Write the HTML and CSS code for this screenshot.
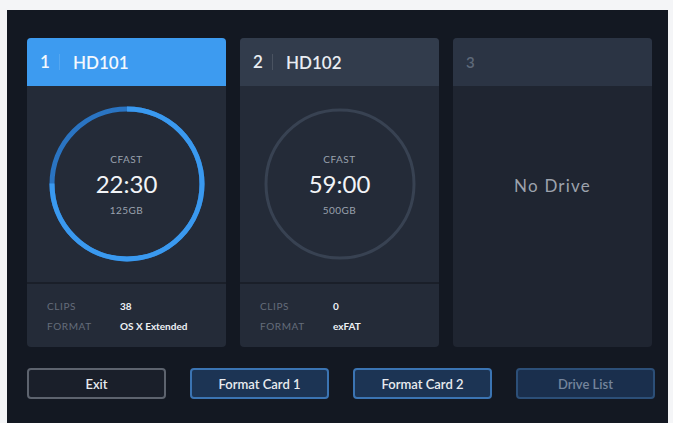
FILE: index.html
```html
<!DOCTYPE html>
<html lang="en">
<head>
  <meta charset="UTF-8">
  <title>Drive Manager</title>
  <meta name="viewport" content="width=device-width, initial-scale=1.0">
  <link rel="stylesheet" href="styles.css">
</head>
<body>

  <div class="screen">
    <div class="slots">

      <div class="slot active">
        <div class="slot-head">
          <span class="num">1</span>
          <span class="name">HD101</span>
        </div>
        <div class="slot-body">
          <div class="dial">
            <svg width="158" height="158" viewBox="0 0 158 158">
              <circle cx="79" cy="79" r="75" fill="none" stroke="#2a74c2" stroke-width="5"/>
              <circle cx="79" cy="79" r="75" fill="none" stroke="#3a99ef" stroke-width="5"
                      stroke-dasharray="353.4 471.2" transform="rotate(-90 79 79)"/>
            </svg>
            <div class="dial-text">
              <span class="media">CFAST</span>
              <span class="time">22:30</span>
              <span class="size">125GB</span>
            </div>
          </div>
        </div>
        <div class="slot-foot">
          <span class="label">CLIPS</span><span class="value">38</span>
          <span class="label">FORMAT</span><span class="value">OS X Extended</span>
        </div>
      </div>

      <div class="slot">
        <div class="slot-head">
          <span class="num">2</span>
          <span class="name">HD102</span>
        </div>
        <div class="slot-body">
          <div class="dial">
            <svg width="158" height="158" viewBox="0 0 158 158">
              <circle cx="79" cy="79" r="74" fill="none" stroke="#384252" stroke-width="3"/>
            </svg>
            <div class="dial-text">
              <span class="media">CFAST</span>
              <span class="time">59:00</span>
              <span class="size">500GB</span>
            </div>
          </div>
        </div>
        <div class="slot-foot">
          <span class="label">CLIPS</span><span class="value">0</span>
          <span class="label">FORMAT</span><span class="value">exFAT</span>
        </div>
      </div>

      <div class="slot empty">
        <div class="slot-head">
          <span class="num">3</span>
        </div>
        <div class="slot-body">
          <span class="no-drive">No Drive</span>
        </div>
      </div>

    </div>

    <div class="actions">
      <button class="btn">Exit</button>
      <button class="btn primary">Format Card 1</button>
      <button class="btn primary">Format Card 2</button>
      <button class="btn disabled">Drive List</button>
    </div>
  </div>

</body>
</html>
```

FILE: styles.css
```css
body {
  margin: 0;
  background: #f4f5f7;
  font-family: 'Lato', 'Open Sans', sans-serif;
  color: #e6e9ee;
}
.screen {
  margin: 10px 0 0 7px;
  width: 661px;
  height: 413px;
  background: #131822;
  padding: 28px 15px 0 20px;
  box-sizing: border-box;
}
.slots {
  display: grid;
  grid-template-columns: 199px 199px 199px;
  column-gap: 14px;
}
.slot {
  height: 309px;
  background: #242b38;
  border-radius: 4px;
  overflow: hidden;
  display: flex;
  flex-direction: column;
}
.slot-head {
  height: 48px;
  background: #323c4c;
  display: flex;
  align-items: center;
  padding-left: 13px;
  font-size: 17px;
  font-weight: 600;
  color: #e9edf2;
}
.slot.active .slot-head {
  background: #3d9bf0;
  color: #f4f8fd;
}
.num {
  width: 19px;
  border-right: 1px solid rgba(255,255,255,0.12);
  line-height: 16px;
  margin-right: 13px;
}
.slot-body {
  height: 196px;
  display: flex;
  align-items: center;
  justify-content: center;
}
.dial {
  position: relative;
  width: 158px;
  height: 158px;
}
.dial svg {
  display: block;
}
.dial-text {
  position: absolute;
  inset: 0;
  display: flex;
  flex-direction: column;
  align-items: center;
  justify-content: center;
}
.media, .size {
  font-size: 10px;
  color: #9aa2ae;
  letter-spacing: 0.5px;
}
.time {
  font-size: 24px;
  color: #f2f4f7;
  margin: 7px 0 8px;
  line-height: 24px;
}
.slot-foot {
  flex: 1;
  border-top: 2px solid #1a1f29;
  display: grid;
  grid-template-columns: 73px 1fr;
  align-content: center;
  row-gap: 8px;
  padding-left: 20px;
  font-size: 10px;
}
.label {
  color: #646d7b;
  letter-spacing: 0.6px;
}
.value {
  color: #eef1f5;
  font-weight: 700;
}
.slot.empty {
  background: #1f2531;
}
.slot.empty .slot-head {
  background: #2b3444;
  color: #5e6979;
  font-size: 15px;
}
.slot.empty .num {
  border-right: none;
}
.no-drive {
  font-size: 17px;
  color: #9da3ad;
  letter-spacing: 1.2px;
  margin-top: 2px;
}
.actions {
  display: grid;
  grid-template-columns: repeat(4, 139px);
  column-gap: 24px;
  margin-top: 21px;
}
.btn {
  height: 31px;
  border-radius: 4px;
  border: 2px solid #5d636e;
  background: #1a1f2a;
  color: #e8ebef;
  font-family: inherit;
  font-size: 13px;
  font-weight: 600;
}
.btn.primary {
  border-color: #3b74b3;
  background: #1c3454;
}
.btn.disabled {
  border-color: #2c4f78;
  background: #1a2f4d;
  color: #75859c;
}
```
